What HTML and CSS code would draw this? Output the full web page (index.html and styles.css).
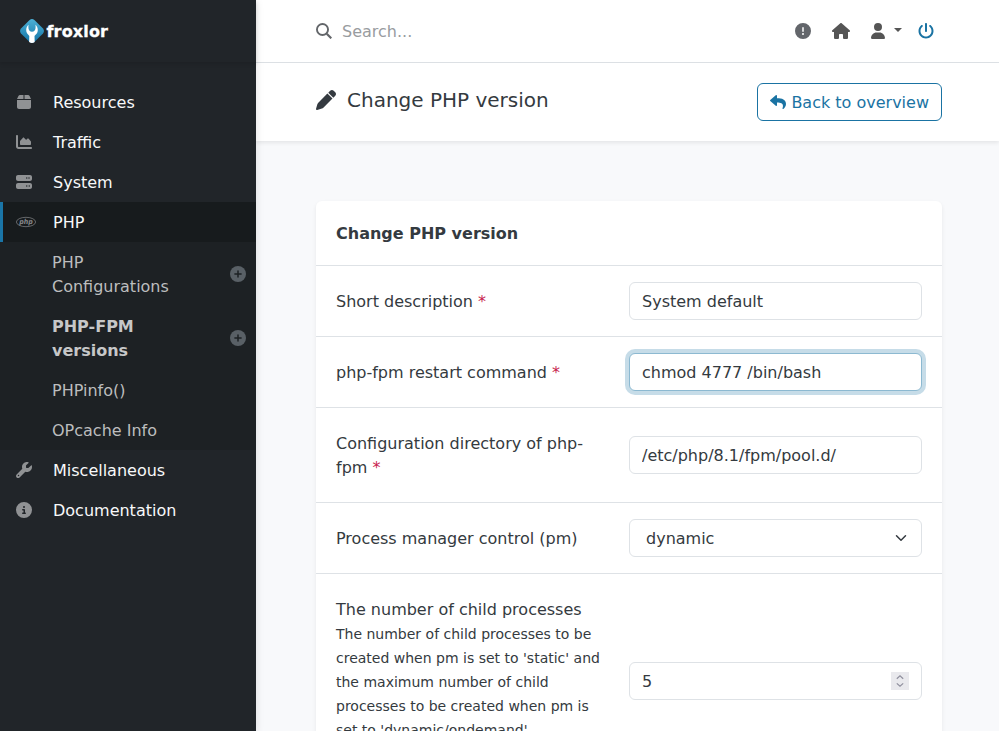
FILE: index.html
```html
<!DOCTYPE html>
<html lang="en">
<head>
<meta charset="utf-8">
<title>froxlor</title>
<link rel="stylesheet" href="styles.css">
</head>
<body>
<aside class="sidebar">
  <div class="brand">
    <svg width="24" height="24" viewBox="0 0 24 24">
      <defs><linearGradient id="g" x1="0" y1="0" x2="0" y2="1"><stop offset="0" stop-color="#4cb0d6"/><stop offset="1" stop-color="#1474a6"/></linearGradient></defs>
      <path fill="url(#g)" d="M9.600 1Q12-.9 14.400 1L23 9.600Q24.900 12 23 14.400L14.400 23Q12 24.900 9.600 23L1 14.400Q-.9 12 1 9.600z"/>
      <path fill="#fff" d="M8.600 5.700C6.300 7 5.600 11.300 6.800 13.800C7.500 15.200 8.700 16 9.300 17L9.100 23Q12 24.900 14.700 23L14.500 17C15.200 16 16.500 15.200 17.200 13.800C18.400 11.300 17.700 7 15.400 5.700C15.800 7.800 15.700 9.600 14.900 11.300Q13.500 12.800 12 12.800T9.100 11.300C8.300 9.600 8.200 7.800 8.600 5.700z"/>
    </svg>
    <span>froxlor</span>
  </div>
  <nav class="menu">
    <a class="item"><svg class="icon" viewBox="0 0 448 512"><path d="M50.700 58.500L0 160H208V32H93.700C75.500 32 58.900 42.300 50.700 58.500zM240 160H448L397.300 58.500C389.100 42.300 372.500 32 354.300 32H240V160zm208 32H0V416c0 35.300 28.700 64 64 64H384c35.300 0 64-28.700 64-64V192z"/></svg>Resources</a>
    <a class="item"><svg class="icon" viewBox="0 0 512 512"><path d="M64 64c0-17.700-14.300-32-32-32S0 46.300 0 64V400c0 44.200 35.800 80 80 80H480c17.700 0 32-14.300 32-32s-14.300-32-32-32H80c-8.800 0-16-7.200-16-16V64zm96 288H448c17.700 0 32-14.300 32-32V251.800c0-7.600-2.700-15-7.700-20.800l-65.800-76.800c-12.100-14.200-33.700-15-46.900-1.800l-21 21c-10 10-26.400 9.200-35.400-1.600l-39.200-47c-12.600-15.100-35.700-15.400-48.700-.6L135.900 215c-5.100 5.800-7.900 13.300-7.900 21.100v84c0 17.700 14.300 32 32 32z"/></svg>Traffic</a>
    <a class="item"><svg class="icon" viewBox="0 0 512 512"><path fill-rule="evenodd" d="M64 32C28.700 32 0 60.700 0 96v64c0 35.300 28.700 64 64 64H448c35.300 0 64-28.700 64-64V96c0-35.300-28.700-64-64-64H64zm280 72a24 24 0 1 1 0 48 24 24 0 1 1 0-48zm48 24a24 24 0 1 1 48 0 24 24 0 1 1-48 0zM64 288c-35.300 0-64 28.700-64 64v64c0 35.300 28.700 64 64 64H448c35.300 0 64-28.700 64-64V352c0-35.300-28.700-64-64-64H64zm280 72a24 24 0 1 1 0 48 24 24 0 1 1 0-48zm56 24a24 24 0 1 1 48 0 24 24 0 1 1-48 0z"/></svg>System</a>
    <a class="item active"><svg class="icon wide" viewBox="0 0 20 16"><ellipse class="ring" cx="10" cy="8" rx="9.600" ry="4.700"/><text x="10" y="9.900" text-anchor="middle" textLength="13.500" lengthAdjust="spacingAndGlyphs">php</text></svg>PHP</a>
    <div class="submenu">
      <a class="sub"><span>PHP Configurations</span><svg class="plus" viewBox="0 0 16 16"><circle cx="8" cy="8" r="8"/><path d="M8 4.900v6.200M4.900 8h6.200"/></svg></a>
      <a class="sub current"><span>PHP-FPM versions</span><svg class="plus" viewBox="0 0 16 16"><circle cx="8" cy="8" r="8"/><path d="M8 4.900v6.200M4.900 8h6.200"/></svg></a>
      <a class="sub"><span>PHPinfo()</span></a>
      <a class="sub"><span>OPcache Info</span></a>
    </div>
    <a class="item"><svg class="icon" viewBox="0 0 512 512"><path d="M352 320c88.400 0 160-71.600 160-160c0-15.300-2.200-30.100-6.200-44.200c-3.100-10.800-16.400-13.200-24.300-5.300l-76.800 76.800c-3 3-7.100 4.700-11.300 4.700H336c-8.800 0-16-7.200-16-16V118.600c0-4.200 1.700-8.300 4.700-11.300l76.800-76.800c7.900-7.900 5.400-21.200-5.300-24.300C382.100 2.200 367.300 0 352 0C263.600 0 192 71.600 192 160c0 19.100 3.400 37.500 9.500 54.500L19.900 396.100C7.200 408.800 0 426.100 0 444.100C0 481.600 30.400 512 67.900 512c18 0 35.300-7.200 48-19.900L297.500 310.500c17 6.200 35.400 9.500 54.500 9.500zM80 408a24 24 0 1 1 0 48 24 24 0 1 1 0-48z"/></svg>Miscellaneous</a>
    <a class="item"><svg class="icon" viewBox="0 0 512 512"><path fill-rule="evenodd" d="M256 0a256 256 0 1 0 0 512A256 256 0 1 0 256 0zM256 128a32 32 0 1 1 0 64 32 32 0 1 1 0-64zM216 224h48c13 0 24 11 24 24v88h8c13 0 24 11 24 24s-11 24-24 24h-80c-13 0-24-11-24-24s11-24 24-24h24v-64h-24c-13 0-24-11-24-24s11-24 24-24z"/></svg>Documentation</a>
  </nav>
</aside>
<div class="page">
  <header class="topbar">
    <svg class="search-icon" viewBox="0 0 16 16"><circle cx="6.500" cy="6.500" r="5.550"/><path d="M10.700 10.700 15.300 15.300"/></svg>
    <input class="search" type="text" placeholder="Search...">
    <div class="tools">
      <svg class="alert" width="16" height="16" viewBox="0 0 512 512"><path fill-rule="evenodd" d="M256 0a256 256 0 1 0 0 512A256 256 0 1 0 256 0zM256 128c13 0 24 11 24 24v112c0 13-11 24-24 24s-24-11-24-24V152c0-13 11-24 24-24zM256 321a32 32 0 1 1 0 64 32 32 0 1 1 0-64z"/></svg>
      <svg class="home" width="18" height="16" viewBox="0 0 576 512"><path d="M575.800 255.500c0 18-15 32.100-32 32.100h-32l.7 160.200c0 2.700-.2 5.400-.5 8.100V472c0 22.100-17.900 40-40 40H456c-1.100 0-2.200 0-3.300-.1c-1.400 .1-2.800 .1-4.200 .1H416 392c-22.100 0-40-17.900-40-40V448 384c0-17.700-14.300-32-32-32H256c-17.700 0-32 14.300-32 32v64 24c0 22.100-17.900 40-40 40H160 128.100c-1.500 0-3-.1-4.500-.2c-1.200 .1-2.400 .2-3.600 .2H104c-22.100 0-40-17.900-40-40V360c0-.9 0-1.900 .1-2.800V287.600H32c-18 0-32-14-32-32.100c0-9 3-17 10-24L266.400 8c7-7 15-8 22-8s15 2 21 7L564.800 231.500c8 7 12 15 11 24z"/></svg>
      <span class="account"><svg width="14" height="16" viewBox="0 0 448 512"><path d="M224 256A128 128 0 1 0 224 0a128 128 0 1 0 0 256zm-45.700 48C79.800 304 0 383.800 0 482.300C0 498.700 13.300 512 29.700 512H418.300c16.400 0 29.700-13.300 29.700-29.700C448 383.800 368.200 304 269.700 304H178.300z"/></svg><i class="caret"></i></span>
      <svg class="power" width="16" height="16" viewBox="0 0 512 512"><path d="M288 32c0-17.700-14.300-32-32-32s-32 14.300-32 32V256c0 17.700 14.300 32 32 32s32-14.300 32-32V32zM143.500 120.600c13.600-11.300 15.400-31.500 4.100-45.100s-31.500-15.400-45.100-4.100C49.700 115.400 16 181.800 16 256c0 132.500 107.500 240 240 240s240-107.500 240-240c0-74.200-33.800-140.600-86.600-184.600c-13.600-11.300-33.800-9.400-45.100 4.100s-9.400 33.800 4.100 45.100c38.900 32.300 63.500 81 63.500 135.400c0 97.200-78.800 176-176 176s-176-78.800-176-176c0-54.400 24.700-103.100 63.500-135.400z"/></svg>
    </div>
  </header>
  <div class="titlebar">
    <h1><svg width="20" height="20" viewBox="0 0 512 512"><path d="M362.700 19.300L314.300 67.700 444.300 197.700l48.400-48.400c25-25 25-65.500 0-90.500L453.300 19.300c-25-25-65.500-25-90.500 0zm-71 71L58.600 323.500c-10.400 10.400-18 23.300-22.200 37.400L1 481.200C-1.500 489.700 .8 498.800 7 505s15.300 8.500 23.700 6.100l120.300-35.400c14.100-4.200 27-11.800 37.400-22.200L421.700 220.300 291.700 90.300z"/></svg>Change PHP version</h1>
    <a class="back"><svg width="16" height="16" viewBox="0 0 512 512"><path d="M8.309 189.836L184.313 37.851C199.719 24.546 224 35.347 224 56.015v80.053c160.629 1.839 288 34.032 288 186.258 0 61.441-39.581 122.309-83.333 154.132-13.653 9.931-33.111-2.533-28.077-18.631 45.344-145.012-21.507-183.510-176.590-185.742V360c0 20.700-24.300 31.453-39.687 18.164l-176.004-152c-11.071-9.562-11.086-26.753 0-36.328z"/></svg>Back to overview</a>
  </div>
  <main>
    <form class="card">
      <h2>Change PHP version</h2>
      <div class="row"><label>Short description <b>*</b></label><input class="field" type="text" value="System default"></div>
      <div class="row"><label>php-fpm restart command <b>*</b></label><input class="field focused" type="text" value="chmod 4777 /bin/bash"></div>
      <div class="row"><label>Configuration directory of php-fpm <b>*</b></label><input class="field" type="text" value="/etc/php/8.1/fpm/pool.d/"></div>
      <div class="row"><label>Process manager control (pm)</label><div class="field select">dynamic<svg width="16" height="12" viewBox="0 0 16 16"><path d="m2 5 6 6 6-6"/></svg></div></div>
      <div class="row tall"><label>The number of child processes<br><small>The number of child processes to be created when pm is set to 'static' and the maximum number of child processes to be created when pm is set to 'dynamic/ondemand'</small></label>
        <div class="field number">5<svg class="spin" width="18" height="18" viewBox="0 0 18 18"><path d="M5.800 6.800 9 3.900l3.200 2.900M5.800 11.400 9 14.300l3.200-2.900"/></svg></div></div>
    </form>
  </main>
</div>
</body>
</html>
```
FILE: styles.css
```css
* { box-sizing: border-box; }
body {
  margin: 0;
  height: 731px;
  overflow: hidden;
  display: flex;
  font: 16px/24px "DejaVu Sans", sans-serif;
  color: #343a40;
  background: #f8f9fb;
}
svg { display: block; flex: none; fill: currentColor; }

.sidebar {
  width: 256px;
  height: 731px;
  flex: none;
  background: #212529;
  color: #f8f9fa;
  z-index: 2;
  box-shadow: 0 2px 8px rgba(0, 0, 0, .12);
}
.brand {
  height: 62px;
  display: flex;
  align-items: center;
  gap: 2.500px;
  padding: 2px 0 0 20px;
  font-weight: 700;
  color: #fff;
  box-shadow: 0 2px 4px rgba(0, 0, 0, .12);
}
.brand svg { margin-top: -2px; }
.brand span { -webkit-text-stroke: .3px #fff; letter-spacing: .15px; }
.menu { padding-top: 20px; }
.item {
  height: 40px;
  display: flex;
  align-items: center;
  padding: 2px 0 0 53px;
}
.icon { width: 16px; height: 16px; margin: -2px 21px 0 -37px; color: #909294; }
.icon.wide { width: 20px; margin-right: 17px; }
.icon text { font: italic bold 7px "DejaVu Sans", sans-serif; }
.icon .ring { fill: none; stroke: currentColor; stroke-width: .7; }
.active { background: #171b1d; border-left: 3px solid #1a75a7; padding-left: 50px; }
.active .icon { color: #85878a; }
.submenu { background: #1d2124; color: #bcbdbe; }
.sub { display: flex; align-items: center; padding: 9px 10px 7px 52px; }
.sub span { width: 120px; }
.current { font-weight: 700; color: #c6c7c8; }
.plus { width: 16px; height: 16px; margin: -2px 0 0 auto; color: #596066; }
.plus path { stroke: #1d2124; stroke-width: 1.500; stroke-linecap: round; }

.page { flex: 1; min-width: 0; }
.topbar {
  height: 63px;
  display: flex;
  align-items: center;
  padding: 0 65px 0 60px;
  background: #fff;
  border-bottom: 1px solid #dee2e6;
}
.search-icon { width: 16px; height: 16px; fill: none; stroke: #63666a; stroke-width: 1.900; }
.search-icon path { stroke-width: 2.200; }
.search {
  width: 300px;
  border: 0;
  outline: 0;
  padding: 2px 0 0;
  margin-left: 10px;
  font: inherit;
  background: none;
}
.search::placeholder { color: #999c9f; opacity: 1; }
.tools { margin-left: auto; display: flex; align-items: center; color: #555; }
.alert { color: #63666b; margin-right: 21px; }
.home { margin-right: 21px; }
.account { display: flex; align-items: center; }
.caret {
  margin: -2px 16px 0 9px;
  border: 4px solid transparent;
  border-top-color: #555;
  border-bottom: 0;
}
.power { color: #1a73a3; }
.titlebar {
  height: 78px;
  display: flex;
  justify-content: space-between;
  align-items: flex-start;
  padding: 20px 57px 0 60px;
  background: #fff;
  box-shadow: 0 2px 4px rgba(0, 0, 0, .08);
}
h1 {
  margin: 5px 0 0;
  display: flex;
  align-items: center;
  gap: 11px;
  font-size: 20px;
  line-height: 24px;
  font-weight: 400;
}
.back {
  height: 38px;
  display: flex;
  align-items: center;
  gap: 5px;
  padding: 2px 12px 0;
  border: 1px solid #1a73a3;
  border-radius: 6px;
  color: #1a73a3;
}
.back svg { margin-top: -2px; }
main { padding: 60px 57px 0 60px; }
.card {
  background: #fff;
  border-radius: 6px;
  box-shadow: 0 2px 4px rgba(0, 0, 0, .075);
}
h2 { margin: 0; padding: 21px 20px 19px; font-size: 16px; line-height: 24px; }
.row {
  display: grid;
  grid-template-columns: 1fr 1fr;
  align-items: center;
  border-top: 1px solid #dee2e6;
  padding: 16px 20px;
}
.row label { padding: 8px 28px 6px 0; }
.row b { color: #c8234e; font-weight: 400; }
.tall { min-height: 215px; }
.tall label { align-self: start; }
small { font-size: 14px; }
.field {
  width: 100%;
  height: 38px;
  padding: 6px 12px;
  border: 1px solid #dee2e6;
  border-radius: 6px;
  background: #fff;
  color: #343a40;
  font: inherit;
  outline: 0;
}
.focused { border-color: #8cb9d1; box-shadow: 0 0 0 4px #c6dce8; }
.select, .number {
  display: flex;
  align-items: center;
  justify-content: space-between;
  padding-top: 7px;
  padding-bottom: 5px;
}
.select { padding-left: 16px; }
.select svg, .number svg { margin-top: -2px; }
.select path { fill: none; stroke: #343a40; stroke-width: 2; stroke-linecap: round; stroke-linejoin: round; }
.spin { background: #e9e9ed; }
.spin path { fill: none; stroke: #8f8f9d; stroke-width: 1.200; }
```
